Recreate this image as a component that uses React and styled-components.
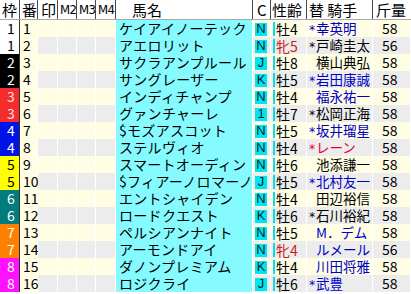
import React from "react";
import styled, { createGlobalStyle } from "styled-components";

const COLS = "20px 18px 20px 19px 19px 20px 137px 18px 36px 66px 38px";

const WAKU = {
  1: { bg: "#ffffff", fg: "#000000" },
  2: { bg: "#000000", fg: "#ffffff" },
  3: { bg: "#f42c2c", fg: "#ffe8e8" },
  4: { bg: "#0014e8", fg: "#ffffff" },
  5: { bg: "#ffff00", fg: "#000000" },
  6: { bg: "#007c7c", fg: "#ffffff" },
  7: { bg: "#ff8000", fg: "#ffffff" },
  8: { bg: "#ff10ff", fg: "#ffffff" },
};

const INK = { black: "#000000", blue: "#0000c8", red: "#e0003c" };

const horses = [
  { waku: 1, ban: 1, name: "ケイアイノーテック", c: "N", sex: "牡4", jockey: "幸英明", star: true, ink: "blue", kin: 58 },
  { waku: 1, ban: 2, name: "アエロリット", c: "N", sex: "牝5", jockey: "戸崎圭太", star: true, ink: "black", kin: 56 },
  { waku: 2, ban: 3, name: "サクラアンプルール", c: "J", sex: "牡8", jockey: "横山典弘", star: false, ink: "black", kin: 58 },
  { waku: 2, ban: 4, name: "サングレーザー", c: "K", sex: "牡5", jockey: "岩田康誠", star: true, ink: "blue", kin: 58 },
  { waku: 3, ban: 5, name: "インディチャンプ", c: "N", sex: "牡4", jockey: "福永祐一", star: false, ink: "blue", kin: 58 },
  { waku: 3, ban: 6, name: "グァンチャーレ", c: "1", sex: "牡7", jockey: "松岡正海", star: true, ink: "black", kin: 58 },
  { waku: 4, ban: 7, name: "$モズアスコット", c: "N", sex: "牡5", jockey: "坂井瑠星", star: true, ink: "blue", kin: 58 },
  { waku: 4, ban: 8, name: "ステルヴィオ", c: "N", sex: "牡4", jockey: "レーン", star: true, ink: "red", kin: 58 },
  { waku: 5, ban: 9, name: "スマートオーディン", c: "N", sex: "牡6", jockey: "池添謙一", star: false, ink: "black", kin: 58 },
  { waku: 5, ban: 10, name: "$フィアーノロマーノ", c: "J", sex: "牡5", jockey: "北村友一", star: true, ink: "blue", kin: 58 },
  { waku: 6, ban: 11, name: "エントシャイデン", c: "N", sex: "牡4", jockey: "田辺裕信", star: false, ink: "black", kin: 58 },
  { waku: 6, ban: 12, name: "ロードクエスト", c: "K", sex: "牡6", jockey: "石川裕紀", star: true, ink: "black", kin: 58 },
  { waku: 7, ban: 13, name: "ペルシアンナイト", c: "N", sex: "牡5", jockey: "M．デム", star: false, ink: "blue", kin: 58 },
  { waku: 7, ban: 14, name: "アーモンドアイ", c: "N", sex: "牝4", jockey: "ルメール", star: false, ink: "blue", kin: 56 },
  { waku: 8, ban: 15, name: "ダノンプレミアム", c: "K", sex: "牡4", jockey: "川田将雅", star: false, ink: "blue", kin: 58 },
  { waku: 8, ban: 16, name: "ロジクライ", c: "J", sex: "牡6", jockey: "武豊", star: true, ink: "blue", kin: 58 },
];

const GlobalStyle = createGlobalStyle`
  body {
    margin: 0;
    background: #ffffff;
    font-family: "Noto Sans CJK JP", "DejaVu Sans", sans-serif;
    color: #000;
  }
`;

const Table = styled.div`
  width: 411px;
`;

const HeadRow = styled.div`
  display: grid;
  grid-template-columns: ${COLS};
  height: 20px;
  box-sizing: border-box;
  border-bottom: 1px solid #a8a8a8;
  background: #ffffff;
`;

const HeadCell = styled.div`
  box-sizing: border-box;
  border-right: 1px solid #4a4a4a;
  padding-left: ${(p) => p.$pad ?? 2}px;
  font-size: 15px;
  line-height: 19px;
  white-space: pre;

  &:last-child {
    border-right: none;
  }
`;

const MHead = styled(HeadCell)`
  font-family: "DejaVu Sans Condensed", "DejaVu Sans", sans-serif;
  font-size: 13px;
  letter-spacing: -0.6px;
  padding-left: 2px;
`;

const Row = styled.div`
  display: grid;
  grid-template-columns: ${COLS};
  height: 17px;
`;

const Cell = styled.div`
  box-sizing: border-box;
  border-right: 1px solid #ffffff;
  border-bottom: 1px solid #ffffff;
  background: ${(p) => (p.$even ? "#ececec" : "#fffde4")};
  font-size: 14px;
  line-height: 16px;
  white-space: pre;
  min-width: 0;
`;

const WakuCell = styled(Cell)`
  background: ${(p) => WAKU[p.$waku].bg};
  color: ${(p) => WAKU[p.$waku].fg};
  border-right: 1px solid #303030;
  border-bottom-color: #d8d8d8;
  text-align: center;
  padding-left: 3px;
`;

const BanCell = styled(Cell)`
  background: #fffde4;
  padding-left: 3px;
`;

const NameCell = styled(Cell)`
  background: #86fbff;
  padding-left: 3px;
  font-size: 14px;
  letter-spacing: 0.3px;
`;

const CCell = styled(Cell)`
  display: flex;
  align-items: center;
  padding-left: 2px;
`;

const Badge = styled.span`
  display: flex;
  align-items: center;
  justify-content: center;
  width: 12px;
  height: 13px;
  background: #00e6f0;
  color: #06202a;
  font-family: "Liberation Sans", sans-serif;
  font-size: 13px;
`;

const SexCell = styled(Cell)`
  display: flex;
  align-items: center;
  gap: 1px;
  padding-left: 2px;
  color: ${(p) => (p.$mare ? "#c81e1e" : "#000000")};
`;

const SexBar = styled.span`
  width: 2px;
  height: 14px;
  background: #00e0ec;
`;

const JockeyCell = styled(Cell)`
  color: ${(p) => INK[p.$ink]};
  padding-left: 1px;
  font-size: 13.5px;
`;

const Star = styled.span`
  display: inline-block;
  width: 8px;
  text-align: center;
  font-family: "DejaVu Sans Mono", monospace;
  font-size: 12px;
`;

const KinCell = styled(Cell)`
  padding-left: 9px;
`;

const App = () => {
  return (
    <>
      <GlobalStyle />
      <Table>
        <HeadRow>
          <HeadCell>枠</HeadCell>
          <HeadCell>番</HeadCell>
          <HeadCell $pad={3}>印</HeadCell>
          <MHead>M2</MHead>
          <MHead>M3</MHead>
          <MHead>M4</MHead>
          <HeadCell $pad={16}>馬名</HeadCell>
          <HeadCell $pad={4}>C</HeadCell>
          <HeadCell $pad={1}>性齢</HeadCell>
          <HeadCell $pad={2}>替 騎手</HeadCell>
          <HeadCell $pad={3}>斤量</HeadCell>
        </HeadRow>
        {horses.map((h, i) => {
          const even = i % 2 === 1;
          return (
            <Row key={h.ban}>
              <WakuCell $waku={h.waku}>{h.waku}</WakuCell>
              <BanCell>{h.ban}</BanCell>
              <Cell $even={even} />
              <Cell $even={even} />
              <Cell $even={even} />
              <Cell $even={even} />
              <NameCell>{h.name}</NameCell>
              <CCell $even={even}>
                <Badge>{h.c}</Badge>
              </CCell>
              <SexCell $even={even} $mare={h.sex.startsWith("牝")}>
                <SexBar />
                {h.sex}
              </SexCell>
              <JockeyCell $even={even} $ink={h.ink}>
                <Star>{h.star ? "*" : " "}</Star>
                {h.jockey}
              </JockeyCell>
              <KinCell $even={even}>{h.kin}</KinCell>
            </Row>
          );
        })}
      </Table>
    </>
  );
};

export default App;
